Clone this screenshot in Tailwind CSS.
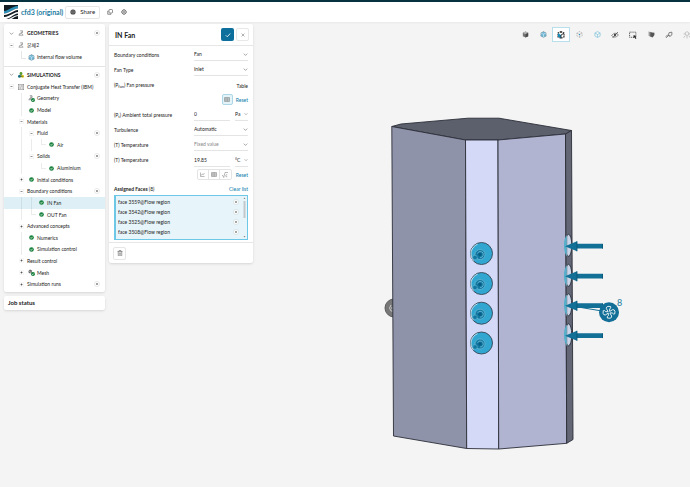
<!DOCTYPE html>
<html lang="en">
<head>
<meta charset="utf-8">
<meta name="viewport" content="width=device-width, initial-scale=1">
<title>cfd3 (original)</title>
<script src="https://cdn.jsdelivr.net/npm/@tailwindcss/browser@4"></script>
</head>
<body class="flex min-h-screen flex-col bg-[#f4f4f4] font-['Lato','Noto_Sans_CJK_KR',sans-serif] text-[5px] leading-[8px] text-[#222]">

<svg class="hidden" aria-hidden="true">
  <symbol id="check" viewBox="0 0 12 12"><circle cx="6" cy="6" r="5.600" fill="#16803c"/><path d="M3.200 6.100l2 2 3.600-3.900" fill="none" stroke="#fff" stroke-width="1.800"/></symbol>
  <symbol id="plus" viewBox="0 0 14 14"><circle cx="7" cy="7" r="6" fill="#fff" stroke="#dcdcdc" stroke-width="1.400"/><path d="M7 4.800v4.400M4.800 7h4.400" stroke="#555" stroke-width="1.600"/></symbol>
  <symbol id="remove" viewBox="0 0 14 14"><circle cx="7" cy="7" r="6" fill="#fff" stroke="#ccd6da" stroke-width="1.400"/><path d="M5.200 5.200l3.600 3.600M8.800 5.200l-3.600 3.600" stroke="#555" stroke-width="1.600"/></symbol>
  <symbol id="minus" viewBox="0 0 10 10"><rect x=".5" y=".5" width="9" height="9" rx="2" fill="#fff" stroke="#e2e2e2"/><path d="M3 5h4" stroke="#555" stroke-width="1.300"/></symbol>
  <symbol id="expand" viewBox="0 0 10 10"><rect x=".5" y=".5" width="9" height="9" rx="2" fill="#fff" stroke="#eaeaea"/><path d="M3 5h4M5 3v4" stroke="#444" stroke-width="1.400"/></symbol>
  <symbol id="chev" viewBox="0 0 10 10"><path d="M1.500 3.200L5 6.800l3.500-3.600" fill="none" stroke="#777" stroke-width="1.300"/></symbol>
  <symbol id="geo" viewBox="0 0 12 12"><path d="M4.500 1.500h4.500v4H6.500M6.500 3v4.500H2.500M2 10.500h8M3.500 7.500L1.500 10.500M8 7.500l2.500 3" fill="none" stroke="#777" stroke-width="1.200"/></symbol>
  <symbol id="geock" viewBox="0 0 14 14"><path d="M3.500 1.500h4.500v4H6M5.500 3v4.500H2M1 9.500h6" fill="none" stroke="#666" stroke-width="1.300"/><circle cx="10" cy="10" r="4" fill="#16803c"/><path d="M8 10l1.500 1.500L12 8.700" fill="none" stroke="#fff" stroke-width="1.200"/></symbol>
  <symbol id="cube" viewBox="0 0 12 12"><path d="M6 .8l4.600 2.400v5.600L6 11.200 1.400 8.800V3.200z" fill="#777"/><path d="M6 .8l4.600 2.400L6 5.600 1.400 3.200z" fill="#b5b5b5"/><path d="M6 5.600l4.600-2.400v5.600L6 11.200z" fill="#4b4b4b"/></symbol>
  <symbol id="cubeblue" viewBox="0 0 12 12"><path d="M6 .8l4.600 2.400v5.600L6 11.200 1.400 8.800V3.200z" fill="#6fb5d3" stroke="#777" stroke-width=".8" stroke-dasharray="2 1"/><path d="M1.400 3.200L6 5.600l4.600-2.400M6 5.600v5.600" fill="none" stroke="#d8eef7" stroke-width="1.100"/></symbol>
  <symbol id="table" viewBox="0 0 12 10"><path d="M1 1h10v8H1zM1 3.700h10M1 6.300h10M4 1v8M7.500 1v8" fill="none" stroke="#777" stroke-width="1"/></symbol>
</svg>

<header class="flex h-[22px] items-center border-t-2 border-[#06313f] bg-white pl-1 shadow-xs">
  <svg class="size-[14px]" viewBox="0 0 28 28" aria-label="Logo"><rect width="28" height="28" fill="#101c22"/><path d="M0 12C11 11 14 3 28 2v5C16 8 13 16 0 17z" fill="#2c8fb8"/><path d="M0 17C13 16 16 8 28 7v3C17 11 14 19 0 20z" fill="#fff"/><path d="M0 24C13 23 17 15 28 14v3C18 18 15 26 4 28H0z" fill="#fff"/><path d="M9 28c7-2 11-7 19-8v2c-6 1-9 4-13 6z" fill="#fff"/></svg>
  <a href="#" class="ml-[3px] text-[7px] font-bold text-[#1c7c9f]">cfd3 (original)</a>
  <button class="ml-[2px] flex h-[13px] items-center gap-1 rounded-xs border border-[#e6e6e6] px-1 text-[6px]">
    <svg class="size-[6px]" viewBox="0 0 12 12"><circle cx="6" cy="6" r="5.200" fill="#444"/><path d="M1 6h10M6 1c-3 3-3 7 0 10M6 1c3 3 3 7 0 10" fill="none" stroke="#aaa" stroke-width=".8"/></svg>Share</button>
  <button class="ml-[7px]" aria-label="Copy"><svg class="size-[6px]" viewBox="0 0 12 12" fill="none" stroke="#555" stroke-width="1.300"><rect x="4" y="1" width="7" height="7" rx="1.500"/><path d="M3 4H1.500v6.500H8V9"/></svg></button>
  <button class="ml-[8px]" aria-label="Settings"><svg class="size-[6px]" viewBox="0 0 12 12" fill="none" stroke="#555"><circle cx="6" cy="6" r="4.200" stroke-width="1.500"/><circle cx="6" cy="6" r="1.500" stroke-width="1.200"/><path d="M6 0v2M6 10v2M0 6h2M10 6h2M2 2l1 1M9 9l1 1M10 2L9 3M3 9l-1 1" stroke-width="1.300"/></svg></button>
</header>

<main class="relative flex grow items-start overflow-hidden pt-[2px] pl-1">
  <!-- 3D viewport -->
  <svg class="absolute inset-0 size-full" viewBox="0 22 690 465" preserveAspectRatio="xMidYMid meet" role="img" aria-label="3D model">
    <circle cx="394" cy="308" r="9" fill="#777" stroke="#5c5c5c"/><path d="M391 305q-3 3 0 6h3M391 308h3" fill="none" stroke="#ccc"/>
    <g stroke="#2b2e38" stroke-width=".9" stroke-linejoin="round">
      <path d="M391.800 126.500L401 124l67-5.800h31l72.500 12.300-6 3.500-67.500 6h-32.500z" fill="#5c606d"/>
      <path d="M391.800 126.500L465.500 140l1.200 308.500L393.500 436z" fill="#8f93a9"/>
      <path d="M465.500 140H498l.7 309-32-.5z" fill="#d3d9f6"/>
      <path d="M498 140l67.500-6 1.200 309.300-68 5.700z" fill="#b0b4d1"/>
      <path d="M565.500 134l6-3.500 1.500 309-6.300 3.800z" fill="#626675"/>
    </g>
    <defs>
      <g id="port"><circle r="11" fill="#31a6d1" stroke="#394553" stroke-width=".9"/><path d="M-8 7A10.300 10.300 0 0 1-4-9.300" fill="none" stroke="#e7f5fb" stroke-width=".8"/><circle cx="-1.500" cy="1" r="5" fill="#1178a2" stroke="#72bbd4" stroke-width=".7"/><path d="M-4 0a3 3 0 1 1 2.500 4" fill="none" stroke="#70bdd9" stroke-width=".8"/><circle cx="-1.500" cy="1" r="1.700" fill="#075d84"/><circle cx="-6.500" cy="4" r="2.300" fill="#1178a2" stroke="#72bbd4" stroke-width=".5"/></g>
      <g id="flow"><ellipse cx="568.500" cy="-1" rx="3.300" ry="11" fill="#ccd4e7" stroke="#252b35" stroke-width=".9"/><path d="M567-11c-4 3-4 17 0 21z" fill="#55b0cb"/><path d="M567-11v21" stroke="#8296a8" stroke-width=".7"/><path d="M565 0l12-5v2.500h26v4.800h-26V5z" fill="#126f96"/><path d="M577-5V5M602.500-2.300v4.600" stroke="#0a5574" stroke-width=".8"/></g>
    </defs>
    <use href="#port" x="481.500" y="253.500"/><use href="#port" x="481.500" y="283.500"/><use href="#port" x="481.500" y="313.200"/><use href="#port" x="481.500" y="343"/>
    <use href="#flow" y="246.300"/><use href="#flow" y="276.300"/><use href="#flow" y="305.800"/><use href="#flow" y="335.800"/>
    <path d="M578 307l24 4" stroke="#126f96"/>
    <circle cx="609" cy="312.300" r="10" fill="#136f97"/>
    <g fill="none" stroke="#fff" stroke-width=".8" transform="translate(609 312.300) rotate(-15)"><path id="blade" d="M-.6-.8L-1.600-4.200Q-1.500-6 .5-6L3-5.200Q3.300-3.500 1.500-3L.8-.8"/><use href="#blade" transform="rotate(90)"/><use href="#blade" transform="rotate(180)"/><use href="#blade" transform="rotate(270)"/></g>
    <text x="617" y="306" font-size="9" fill="#1c7c9f">8</text>
  </svg>

  <aside class="relative w-[101px] shrink-0">
    <nav class="rounded-xs bg-white shadow-sm" aria-label="Project tree">
      <section class="h-[43px] border-b border-[#e4e4e4] pt-[3px]">
        <div class="flex h-[12px] items-center pl-[2px] pr-[5px]"><span class="flex w-[10px] justify-center"><svg class="size-[5px]"><use href="#chev"/></svg></span><span class="flex w-[10px] justify-center"><svg class="size-[6px]"><use href="#geo"/></svg></span><h2 class="ml-px font-bold">GEOMETRIES</h2><button class="ml-auto" aria-label="Add geometry"><svg class="size-[6px]"><use href="#plus"/></svg></button></div>
        <div class="flex h-[12px] items-center pl-[2px]"><span class="flex w-[10px] justify-center"><svg class="size-[5px]"><use href="#minus"/></svg></span><span class="flex w-[10px] justify-center"><svg class="size-[6px]"><use href="#geo"/></svg></span><span class="ml-px">본체2</span></div>
        <div class="flex h-[12px] items-center pl-[17px]"><span class="mb-[4px] h-[8px] w-[5px] border-b border-l border-[#e6e6e6]"></span><span class="flex w-[10px] justify-center"><svg class="size-[7px]"><use href="#cubeblue"/></svg></span><span class="ml-px">Internal flow volume</span></div>
      </section>
      <section class="pt-px pb-[2px]">
        <div class="flex h-[13px] items-center pl-[2px] pr-[5px]"><span class="flex w-[10px] justify-center"><svg class="size-[5px]"><use href="#chev"/></svg></span><span class="flex w-[10px] justify-center"><svg class="size-[6px]" viewBox="0 0 12 12"><circle cx="6" cy="3" r="2.800" fill="#5a9e2f"/><circle cx="3" cy="8.500" r="3" fill="#17698d"/><circle cx="9" cy="8.500" r="3" fill="#d4bd16"/><path d="M6 4v4M3 9h6" stroke="#3d702b" stroke-width="1.500"/></svg></span><h2 class="ml-px font-bold">SIMULATIONS</h2><button class="ml-auto" aria-label="Add simulation"><svg class="size-[6px]"><use href="#plus"/></svg></button></div>
        <ul class="grid h-[209px] auto-rows-fr grid-cols-1 *:flex *:items-center *:pr-[5px]">
          <li class="pl-[2px]"><span class="flex w-[10px] justify-center"><svg class="size-[5px]"><use href="#minus"/></svg></span><span class="flex w-[10px] justify-center"><svg class="size-[6px]" viewBox="0 0 12 12" fill="none" stroke="#777"><rect x=".5" y=".5" width="11" height="11"/><path d="M3 2q3 2 0 4t0 4M6 2q3 2 0 4t0 4M9 2q2 2 0 4t0 4"/></svg></span><span class="ml-px whitespace-nowrap">Conjugate Heat Transfer (IBM)</span></li>
          <li class="pl-[17px]"><span class="w-[5px] self-stretch border-l border-[#ebebeb]"></span><span class="flex w-[10px] justify-center"><svg class="size-[7px]"><use href="#geock"/></svg></span><span class="ml-px">Geometry</span></li>
          <li class="pl-[17px]"><span class="w-[5px] self-stretch border-l border-[#ebebeb]"></span><span class="flex w-[10px] justify-center"><svg class="size-[5px]"><use href="#check"/></svg></span><span class="ml-px">Model</span></li>
          <li class="pl-[12px]"><span class="flex w-[10px] justify-center"><svg class="size-[5px]"><use href="#minus"/></svg></span><span class="ml-px">Materials</span></li>
          <li class="pl-[17px]"><span class="w-[5px] self-stretch border-l border-[#ebebeb]"></span><span class="flex w-[10px] justify-center"><svg class="size-[5px]"><use href="#minus"/></svg></span><span class="ml-px">Fluid</span><button class="ml-auto" aria-label="Add fluid"><svg class="size-[6px]"><use href="#plus"/></svg></button></li>
          <li class="pl-[17px]"><span class="w-[10px] self-stretch border-l border-[#ebebeb]"></span><span class="w-[10px] self-stretch border-l border-[#ebebeb]"></span><span class="mb-[5px] h-[6px] w-[5px] border-b border-l border-[#ebebeb]"></span><span class="flex w-[10px] justify-center"><svg class="size-[5px]"><use href="#check"/></svg></span><span class="ml-px">Air</span></li>
          <li class="pl-[17px]"><span class="w-[5px] self-stretch border-l border-[#ebebeb]"></span><span class="flex w-[10px] justify-center"><svg class="size-[5px]"><use href="#minus"/></svg></span><span class="ml-px">Solids</span><button class="ml-auto" aria-label="Add solid"><svg class="size-[6px]"><use href="#plus"/></svg></button></li>
          <li class="pl-[17px]"><span class="w-[20px] self-stretch border-l border-[#ebebeb]"></span><span class="mb-[5px] h-[6px] w-[5px] border-b border-l border-[#ebebeb]"></span><span class="flex w-[10px] justify-center"><svg class="size-[5px]"><use href="#check"/></svg></span><span class="ml-px">Aluminium</span></li>
          <li class="pl-[12px]"><span class="flex w-[10px] justify-center"><svg class="size-[5px]"><use href="#expand"/></svg></span><span class="flex w-[10px] justify-center"><svg class="size-[5px]"><use href="#check"/></svg></span><span class="ml-px">Initial conditions</span></li>
          <li class="pl-[12px]"><span class="flex w-[10px] justify-center"><svg class="size-[5px]"><use href="#minus"/></svg></span><span class="ml-px">Boundary conditions</span><button class="ml-auto" aria-label="Add boundary condition"><svg class="size-[6px]"><use href="#plus"/></svg></button></li>
          <li class="bg-[#def0f6] pl-[17px]" aria-current="true"><span class="w-[10px] self-stretch border-l border-[#cbdfe6]"></span><span class="w-[5px] self-stretch border-l border-[#cbdfe6]"></span><span class="flex w-[10px] justify-center"><svg class="size-[5px]"><use href="#check"/></svg></span><span class="ml-px">IN Fan</span></li>
          <li class="pl-[17px]"><span class="w-[10px] self-stretch border-l border-[#ebebeb]"></span><span class="mb-[5px] h-[6px] w-[5px] border-b border-l border-[#ebebeb]"></span><span class="flex w-[10px] justify-center"><svg class="size-[5px]"><use href="#check"/></svg></span><span class="ml-px">OUT Fan</span></li>
          <li class="pl-[12px]"><span class="flex w-[10px] justify-center"><svg class="size-[5px]"><use href="#expand"/></svg></span><span class="ml-px">Advanced concepts</span></li>
          <li class="pl-[17px]"><span class="w-[5px] self-stretch border-l border-[#ebebeb]"></span><span class="flex w-[10px] justify-center"><svg class="size-[5px]"><use href="#check"/></svg></span><span class="ml-px">Numerics</span></li>
          <li class="pl-[17px]"><span class="w-[5px] self-stretch border-l border-[#ebebeb]"></span><span class="flex w-[10px] justify-center"><svg class="size-[5px]"><use href="#check"/></svg></span><span class="ml-px">Simulation control</span></li>
          <li class="pl-[12px]"><span class="flex w-[10px] justify-center"><svg class="size-[5px]"><use href="#expand"/></svg></span><span class="ml-px">Result control</span></li>
          <li class="pl-[12px]"><span class="flex w-[10px] justify-center"><svg class="size-[5px]"><use href="#expand"/></svg></span><span class="flex w-[10px] justify-center"><svg class="size-[7px]" viewBox="0 0 14 14"><path d="M4 1l4 2v4L4 9 1 7V4z" fill="#666"/><path d="M1 4l4 2 3-3M5 6v3" stroke="#ccc" fill="none"/><circle cx="10" cy="10" r="4" fill="#16803c"/><path d="M8 10l1.500 1.500L12 8.700" fill="none" stroke="#fff" stroke-width="1.200"/></svg></span><span class="ml-px">Mesh</span></li>
          <li class="pl-[12px]"><span class="flex w-[10px] justify-center"><svg class="size-[5px]"><use href="#expand"/></svg></span><span class="ml-px">Simulation runs</span><button class="ml-auto" aria-label="Add run"><svg class="size-[6px]"><use href="#plus"/></svg></button></li>
        </ul>
      </section>
    </nav>
    <section class="mt-[4px] flex h-[14px] items-center rounded-xs bg-white pl-1 shadow-sm"><h2 class="text-[6px] font-bold">Job status</h2></section>
  </aside>

  <form class="relative ml-[4px] w-[144px] shrink-0 rounded-xs bg-white shadow-sm" onsubmit="return false">
    <div class="flex h-[22px] items-center border-b border-[#e6e6e6] pr-[4px] pl-[6px]">
      <h2 class="text-[7px] font-bold">IN Fan</h2>
      <button class="ml-auto flex size-[13px] items-center justify-center rounded-xs bg-[#0d6f9b]" aria-label="Apply"><svg class="size-[6px]" viewBox="0 0 12 12"><path d="M1.500 6.500l3 3 6-6.500" fill="none" stroke="#fff" stroke-width="1.600"/></svg></button>
      <button class="ml-[2px] flex size-[13px] items-center justify-center rounded-xs border border-[#e8e8e8]" aria-label="Close"><svg class="size-[4px]" viewBox="0 0 8 8"><path d="M1 1l6 6M7 1L1 7" stroke="#888" stroke-width="1.300"/></svg></button>
    </div>
    <div class="grid auto-rows-[15px] grid-cols-[1fr_54px] items-center gap-x-2 px-[5px] pt-px">
      <label for="bc">Boundary conditions</label>
      <div class="flex h-[13px] items-center border-b border-[#e4e4e4]"><select id="bc" class="grow appearance-none"><option>Fan</option></select><svg class="size-[5px]"><use href="#chev"/></svg></div>
      <label for="ft">Fan Type</label>
      <div class="flex h-[13px] items-center border-b border-[#e4e4e4]"><select id="ft" class="grow appearance-none"><option>Inlet</option></select><svg class="size-[5px]"><use href="#chev"/></svg></div>
      <span>(P<sub class="text-[4px]">fan</sub>) Fan pressure</span>
      <span class="pt-[2px] text-right">Table</span>
      <div class="col-span-2 flex items-center justify-end gap-[3px]"><button class="flex size-[11px] items-center justify-center rounded-xs border border-[#acd7e8] bg-[#e4f3f8]" aria-label="Table input"><svg class="h-[5px] w-[6px]"><use href="#table"/></svg></button><button class="text-[#087aaa]">Reset</button></div>
      <label for="pt">(P<sub class="text-[4px]">t</sub>) Ambient total pressure</label>
      <div class="flex h-[13px] gap-[5px]"><input id="pt" value="0" class="w-[36px] border-b border-[#e4e4e4]"><div class="flex grow items-center border-b border-[#e4e4e4]"><select aria-label="Pressure unit" class="w-[8px] grow appearance-none"><option>Pa</option></select><svg class="size-[4px]"><use href="#chev"/></svg></div></div>
      <label for="tb">Turbulence</label>
      <div class="flex h-[13px] items-center border-b border-[#e4e4e4]"><select id="tb" class="grow appearance-none"><option>Automatic</option></select><svg class="size-[5px]"><use href="#chev"/></svg></div>
      <label for="tt">(T) Temperature</label>
      <div class="flex h-[13px] items-center border-b border-[#e4e4e4]"><select id="tt" class="grow appearance-none text-[#888]"><option>Fixed value</option></select><svg class="size-[5px]"><use href="#chev"/></svg></div>
      <label for="tv">(T) Temperature</label>
      <div class="flex h-[13px] gap-[5px] self-end"><input id="tv" value="19.85" class="w-[36px] border-b border-[#e4e4e4]"><div class="flex grow items-center border-b border-[#e4e4e4]"><select aria-label="Temperature unit" class="w-[8px] grow appearance-none"><option>°C</option></select><svg class="size-[4px]"><use href="#chev"/></svg></div></div>
      <div class="col-span-2 flex items-center justify-end gap-[4px]">
        <div class="flex h-[11px] divide-x divide-[#e4e4e4] rounded-xs border border-[#e4e4e4] *:flex *:w-[11px] *:items-center *:justify-center">
          <button aria-label="Chart"><svg class="size-[5px]" viewBox="0 0 10 10"><path d="M1 1v8h8M2.500 7l2-3 2 1.500L9 2" fill="none" stroke="#777"/></svg></button>
          <button aria-label="Table"><svg class="h-[5px] w-[6px]"><use href="#table"/></svg></button>
          <button aria-label="Formula"><svg class="size-[6px]" viewBox="0 0 12 12"><path d="M0 7h1.500l2 4L6 1h6M10.500 5.500q-3-1-3 2t3 2" fill="none" stroke="#777"/></svg></button>
        </div>
        <button class="text-[#087aaa]">Reset</button>
      </div>
    </div>
    <div class="mx-[5px] flex h-[13px] items-center justify-between"><h3><b>Assigned Faces</b> (8)</h3><button class="text-[#087aaa]">Clear list</button></div>
    <div class="mx-[5px] flex h-[45px] border border-l-2 border-[#6cc8e6] bg-[#e7f5fa] pt-px pr-px">
      <ul class="grid grow auto-rows-[10px] pl-[2px] *:flex *:items-center *:justify-between">
        <li>face 3559@Flow region<button aria-label="Remove face 3559"><svg class="size-[6px]"><use href="#remove"/></svg></button></li>
        <li>face 3542@Flow region<button aria-label="Remove face 3542"><svg class="size-[6px]"><use href="#remove"/></svg></button></li>
        <li>face 3525@Flow region<button aria-label="Remove face 3525"><svg class="size-[6px]"><use href="#remove"/></svg></button></li>
        <li>face 3508@Flow region<button aria-label="Remove face 3508"><svg class="size-[6px]"><use href="#remove"/></svg></button></li>
      </ul>
      <svg class="ml-[4px] h-[41px] w-[3px]" viewBox="0 0 3 41"><path d="M.5 2l1-1.500L2.500 2zM.5 39l1 1.500 1-1.500z" fill="#888"/><rect x=".5" y="4" width="2" height="17" fill="#c3c8ca"/></svg>
    </div>
    <div class="mt-[2px] flex h-[21px] items-center border-t border-[#e6e6e6] pl-[4px]"><button class="flex size-[13px] items-center justify-center rounded-xs border border-[#e6e6e6]" aria-label="Delete"><svg class="size-[6px]" viewBox="0 0 12 12" fill="none" stroke="#666" stroke-width="1.200"><path d="M1 3h10M4 3V1h4v2M2.500 3v8.400h7V3M4.800 5v4.500M7.200 5v4.500"/></svg></button></div>
  </form>

  <div class="relative -mr-[6px] ml-auto flex shrink-0 items-center pt-[3px] *:flex *:h-[15px] *:w-[18px] *:items-center *:justify-center" role="toolbar" aria-label="View">
    <button aria-label="Solid view"><svg class="size-[7px]"><use href="#cube"/></svg></button>
    <button aria-label="Transparent view"><svg class="size-[7px]"><use href="#cubeblue"/></svg></button>
    <button class="border border-[#b8dfec] bg-white" aria-label="Face selection" aria-pressed="true"><svg class="size-[8px]" viewBox="0 0 12 12"><path d="M6 1l4.500 2.400v5.200L6 11 1.500 8.600V3.400z" fill="#fff" stroke="#222" stroke-width="2" stroke-dasharray="2 1.200"/><path d="M1.500 3.400L6 6v5L1.500 8.600z" fill="#168bb8"/><path d="M6 6l4.500-2.600M6 6v5" stroke="#222" stroke-width="1.300"/></svg></button>
    <button aria-label="Vertices"><svg class="size-[7px]" viewBox="0 0 12 12" fill="none"><path d="M6 1l4.500 2.400v5.200L6 11 1.500 8.600V3.400zM1.500 3.400L6 6l4.500-2.600M6 6v5" stroke="#888" stroke-dasharray="1.500 1.500"/><circle cx="6" cy="6" r="1.200" fill="#2b96c0"/></svg></button>
    <button aria-label="Edges"><svg class="size-[7px]" viewBox="0 0 12 12"><path d="M6 1l4.500 2.400v5.200L6 11 1.500 8.600V3.400zM1.500 3.400L6 6l4.500-2.600M6 6v5" fill="none" stroke="#6dbbd7"/></svg></button>
    <button aria-label="Hide"><svg class="size-[8px]" viewBox="0 0 14 14"><path d="M1 8q6-8 12-1-6 7-12 1z" fill="none" stroke="#666" stroke-width="1.200"/><circle cx="7" cy="7" r="2" fill="#444"/><path d="M3 12l9-10" stroke="#444" stroke-width="1.400"/></svg></button>
    <button aria-label="Box select"><svg class="size-[8px]" viewBox="0 0 14 14"><rect x="1" y="2" width="11" height="9" fill="none" stroke="#444" stroke-width="1.500" stroke-dasharray="2 1.300"/><path d="M8 7l5 2-2 1 2 3-1.500 1-2-3L8 12.500z" fill="#222"/></svg></button>
    <button aria-label="Clip"><svg class="size-[7px]" viewBox="0 0 12 12"><path d="M1 1l5 1v9L1 8z" fill="#999"/><path d="M4 2l7 1v4l-3 4-4-2z" fill="#555"/></svg></button>
    <button aria-label="Measure"><svg class="size-[8px]" viewBox="0 0 14 14"><path d="M2 12l4-4 3 1M7 3l5-1v5L9 9 6 8zM1 10l4-3" fill="none" stroke="#666" stroke-width="1.400"/></svg></button>
    <button aria-label="Explode"><svg class="size-[8px]" viewBox="0 0 14 14" fill="none" stroke="#aaa" stroke-width="1.100"><path d="M7 1l3 2v3L7 8 4 6V3zM1 12l3-4M13 12l-3-4M7 8v5M1 5h3M10 5h3"/></svg></button>
  </div>
</main>
</body>
</html>
